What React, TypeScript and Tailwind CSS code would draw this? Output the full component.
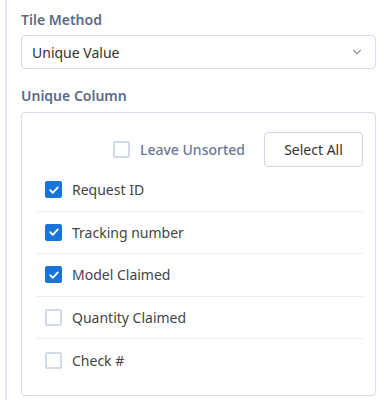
import { ChevronDown } from "lucide-react";

const columns = [
  { name: "Request ID", checked: true },
  { name: "Tracking number", checked: true },
  { name: "Model Claimed", checked: true },
  { name: "Quantity Claimed", checked: false },
  { name: "Check #", checked: false },
];

function Box({ checked }: { checked: boolean }) {
  return checked ? (
    <span className="flex h-[17px] w-[17px] shrink-0 items-center justify-center rounded-[2px] bg-[#1a74d8]">
      <svg width="12" height="12" viewBox="0 0 12 12" fill="none">
        <path d="M2.2 6.2l2.6 2.6 5-5.4" stroke="white" strokeWidth="1.8" strokeLinecap="round" strokeLinejoin="round" />
      </svg>
    </span>
  ) : (
    <span className="h-[17px] w-[17px] shrink-0 rounded-[2px] border-2 border-[#d3dae8] bg-white" />
  );
}

export default function App() {
  return (
    <div className="flex h-[400px] w-[384px] bg-white font-['Noto_Sans',sans-serif]">
      <div className="ml-[5px] w-[2px] bg-[#e2e7f2]" />
      <div className="flex flex-1 flex-col pl-[14px] pr-[8px] pt-[10px]">
        <div className="text-[14px] font-semibold leading-[20px] text-[#5b6b8b]">Tile Method</div>
        <div className="mt-[5px] flex h-[34px] items-center justify-between rounded-[4px] border border-[#d6dceb] pl-[10px] pr-[11px]">
          <span className="text-[14px] text-[#333]">Unique Value</span>
          <ChevronDown size={14} strokeWidth={2} className="text-[#8a97b0]" />
        </div>
        <div className="mt-[17px] text-[14px] font-semibold leading-[20px] text-[#5b6b8b]">Unique Column</div>
        <div className="mb-[4px] mt-[6px] flex-1 rounded-[4px] border border-[#d6dceb] pl-[14px] pr-[12px] pt-[19px]">
          <div className="flex items-center justify-end gap-[19px]">
            <label className="flex items-center gap-[10px]">
              <Box checked={false} />
              <span className="text-[14px] font-medium text-[#6a789a]">Leave Unsorted</span>
            </label>
            <button className="h-[35px] w-[99px] rounded-[4px] border border-[#cfd6e4] text-[14px] text-[#333]">Select All</button>
          </div>
          <div className="mt-[2px]">
            {columns.map((c, i) => (
              <div
                key={c.name}
                className={
                  "flex h-[42.5px] items-center gap-[10px] pl-[9px] " +
                  (i < columns.length - 1 ? "border-b border-[#eaedf5]" : "")
                }
              >
                <Box checked={c.checked} />
                <span className="text-[14px] text-[#444]">{c.name}</span>
              </div>
            ))}
          </div>
        </div>
      </div>
    </div>
  );
}
